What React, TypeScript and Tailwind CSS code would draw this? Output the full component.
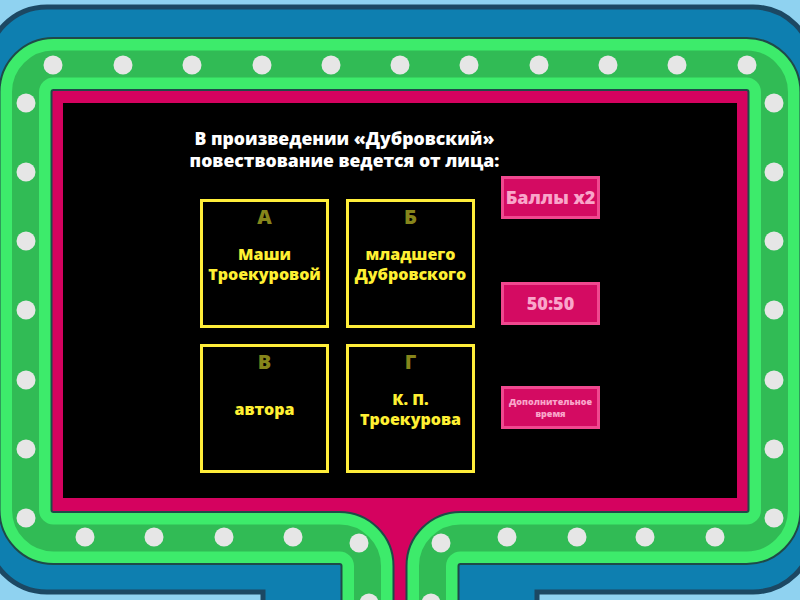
import React from 'react';

// Stage frame artwork: dotted green band around the pink screen
const TOP_DOTS = [53, 123, 192, 262, 331, 400, 469, 539, 608, 677, 747];
const SIDE_DOTS = [103, 172, 241, 310, 380, 449, 518];
const BOTTOM_DOTS: [number, number][] = [
    [85, 537], [154, 537], [224, 537], [293, 537], [359, 543], [369, 603],
    [441, 543], [507, 537], [577, 537], [645, 537], [715, 537], [431, 603],
];

const R = 28;
const BAND = `M 367.5 620 V ${538 + R} A ${R} ${R} 0 0 0 ${367.5 - R} 538 H ${25.5 + R} A ${R} ${R} 0 0 1 25.5 ${538 - R} V ${64 + R} A ${R} ${R} 0 0 1 ${25.5 + R} 64 H ${774.5 - R} A ${R} ${R} 0 0 1 774.5 ${64 + R} V ${538 - R} A ${R} ${R} 0 0 1 ${774.5 - R} 538 H ${432.5 + R} A ${R} ${R} 0 0 0 432.5 ${538 + R} V 620`;

const StageFrame: React.FC = () => (
    <svg className="absolute inset-0" width="800" height="600" viewBox="0 0 800 600">
        <rect x="0" y="0" width="800" height="600" fill="#8fd2f0" />
        <path
            d="M -13 67 A 60 60 0 0 1 47 7 H 753 A 60 60 0 0 1 813 67 V 533 A 60 60 0 0 1 753 592 H 537 V 620 H 263 V 592 H 47 A 60 60 0 0 1 -13 533 Z"
            fill="#0e7fb0"
            stroke="#1c4863"
            strokeWidth="5"
        />
        <rect x="46" y="86" width="708" height="431" rx="8" fill="#d5025f" stroke="#3a1030" strokeWidth="2" />
        <rect x="346" y="505" width="108" height="100" fill="#d5025f" />
        <path d={BAND} fill="none" stroke="#1f4a48" strokeWidth="54" />
        <path d={BAND} fill="none" stroke="#3deb6b" strokeWidth="50" />
        <path d={BAND} fill="none" stroke="#31bb55" strokeWidth="27" />
        {TOP_DOTS.map((x) => (
            <circle key={`t${x}`} cx={x} cy="65" r="9.5" fill="#e6e6e6" />
        ))}
        {SIDE_DOTS.map((y) => (
            <React.Fragment key={`s${y}`}>
                <circle cx="26" cy={y} r="9.5" fill="#e6e6e6" />
                <circle cx="774" cy={y} r="9.5" fill="#e6e6e6" />
            </React.Fragment>
        ))}
        {BOTTOM_DOTS.map(([x, y]) => (
            <circle key={`b${x}`} cx={x} cy={y} r="9.5" fill="#e6e6e6" />
        ))}
    </svg>
);

const ANSWERS = [
    { letter: 'А', text: ['Маши', 'Троекуровой'] },
    { letter: 'Б', text: ['младшего', 'Дубровского'] },
    { letter: 'В', text: ['автора'] },
    { letter: 'Г', text: ['К. П.', 'Троекурова'] },
];

const AnswerCard: React.FC<{ letter: string; text: string[] }> = ({ letter, text }) => (
    <div className="relative w-[129px] h-[129px] border-[3px] border-[#ffee3a] flex items-center justify-center">
        <span className="absolute top-[2px] left-0 right-0 text-center text-[20px] leading-[26px] font-extrabold text-[#86851b]">
            {letter}
        </span>
        <div className="text-center text-[16px] leading-[20px] font-extrabold text-[#fff033] whitespace-nowrap">
            {text.map((line) => (
                <div key={line}>{line}</div>
            ))}
        </div>
    </div>
);

const PowerButton: React.FC<{ children: React.ReactNode; className?: string }> = ({ children, className }) => (
    <div className={`w-[99px] h-[43px] bg-[#d40b62] border-[3px] border-[#f0488f] flex items-center justify-center text-center font-extrabold text-[#f9a6ca] whitespace-nowrap ${className ?? ''}`}>
        {children}
    </div>
);

export default function App() {
    return (
        <div className="relative w-[800px] h-[600px] overflow-hidden" style={{ fontFamily: '"Open Sans", "DejaVu Sans", sans-serif' }}>
            <StageFrame />
            <div className="relative pt-[103px] pl-[63px]">
                <div className="w-[674px] h-[395px] bg-black flex pl-[130px] pt-[24px]">
                    <div className="w-[303px] flex flex-col">
                        <p className="-mx-[12px] text-center text-[17.6px] leading-[22px] font-extrabold text-white whitespace-nowrap">
                            В произведении «Дубровский»
                            <br />
                            повествование ведется от лица:
                        </p>
                        <div className="mt-[28px] ml-[7px] grid grid-cols-[129px_129px] gap-x-[17px] gap-y-[16px]">
                            {ANSWERS.map((a) => (
                                <AnswerCard key={a.letter} letter={a.letter} text={a.text} />
                            ))}
                        </div>
                    </div>
                    <div className="ml-[5px] mt-[49px] flex flex-col">
                        <PowerButton className="text-[18px]">Баллы x2</PowerButton>
                        <PowerButton className="mt-[63px] text-[18px]">50:50</PowerButton>
                        <PowerButton className="mt-[61px] text-[9px] leading-[12px]">
                            <span>Дополнительное<br />время</span>
                        </PowerButton>
                    </div>
                </div>
            </div>
        </div>
    );
}
